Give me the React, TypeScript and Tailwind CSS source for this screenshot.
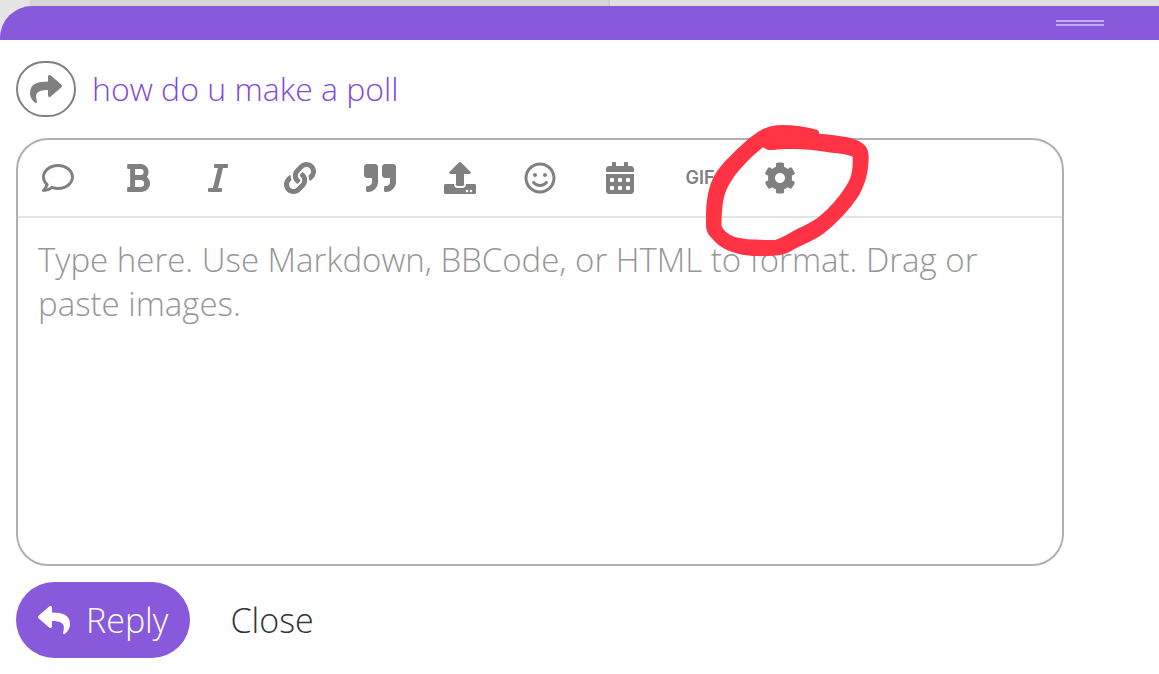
import type { ReactNode } from "react";
import {
  FaBold,
  FaCalendarAlt,
  FaCog,
  FaItalic,
  FaLink,
  FaQuoteRight,
  FaRegComment,
  FaRegSmile,
  FaReply,
  FaShare,
  FaUpload,
} from "react-icons/fa";

type Tool = { label: string; icon: ReactNode };

const textTools: Tool[] = [
  { label: "Comment", icon: <FaRegComment /> },
  { label: "Bold", icon: <FaBold /> },
  { label: "Italic", icon: <FaItalic /> },
];

const insertTools: Tool[] = [
  { label: "Link", icon: <FaLink /> },
  { label: "Quote", icon: <FaQuoteRight /> },
  { label: "Upload", icon: <FaUpload /> },
  { label: "Emoji", icon: <FaRegSmile /> },
  { label: "Date", icon: <FaCalendarAlt /> },
  {
    label: "GIF",
    icon: <span className="font-['Inter'] text-lg font-semibold">GIF</span>,
  },
  { label: "Options", icon: <FaCog /> },
];

function ToolGroup({ tools }: { tools: Tool[] }) {
  return (
    <div className="flex">
      {tools.map((tool) => (
        <button
          key={tool.label}
          type="button"
          aria-label={tool.label}
          className="flex w-20 items-center justify-center"
        >
          {tool.icon}
        </button>
      ))}
    </div>
  );
}

function HandDrawnRing() {
  return (
    <svg
      aria-hidden="true"
      viewBox="0 0 660 480"
      className="pointer-events-none absolute -top-[30px] left-[652px] h-[160px] w-[220px]"
    >
      <path
        fill="#ff3344"
        fillRule="evenodd"
        d="M440 59 C400 48 370 46 340 45 C315 45 295 49 275 59 C257 69 240 82 226 95 C195 123 165 152 146 177 C120 210 110 255 108 310 V345 C108 362 114 373 125 384 C140 402 157 415 176 422 C200 431 225 437 250 438 C280 439 310 438 330 435 C346 432 358 426 370 419 C400 402 433 391 460 371 C495 345 540 298 567 256 C586 220 595 190 596 143 C596 122 591 110 579 101 C565 91 546 84 528 81 C500 76 473 72 447 71 C448 65 446 60 440 59 Z M279 112 C248 137 212 172 188 206 C166 238 159 265 157 295 C155 315 154 335 155 349 C163 365 180 377 197 382 C220 389 270 390 316 390 C340 382 357 369 377 359 C400 349 426 336 442 324 C472 301 500 270 523 236 C545 205 549 185 548 140 C530 132 498 130 470 126 C430 118 390 116 350 117 C325 117 310 121 296 120 C289 119 284 115 279 112 Z"
      />
    </svg>
  );
}

export default function App() {
  return (
    <div className="min-h-screen bg-white font-['Open_Sans',sans-serif] text-[32px] font-light">
      <header className="bg-[#e5e5e5]">
        <div className="flex h-1.5">
          <div className="w-[30px]" />
          <div className="w-[580px] border-r-2 border-[#cdcdcd] bg-[#d5d6d5]" />
          <div className="flex-1 bg-[#e0e0e0]" />
        </div>
        <div className="flex h-[34px] items-center justify-end rounded-tl-[32px] bg-[#8959dc] pr-[55px]">
          <div className="h-1.5 w-12 border-y-2 border-[#c4abee]" />
        </div>
      </header>

      <main className="pt-[21px] pr-[95px] pb-4 pl-4">
        <div className="flex items-center gap-4">
          <button
            type="button"
            aria-label="Reply options"
            className="flex h-14 w-15 items-center justify-center rounded-[28px] border-2 border-[#808080] text-[#808080]"
          >
            <FaShare />
          </button>
          <a href="#topic" className="leading-14 text-[#8148dc]">
            how do u make a poll
          </a>
        </div>

        <div className="relative mt-[21px] rounded-[32px] border-2 border-[#b0b0b0]">
          <div className="flex h-[78px] gap-0.5 border-b-2 border-[#e4e4e4] text-[#808080]">
            <ToolGroup tools={textTools} />
            <ToolGroup tools={insertTools} />
          </div>
          <textarea
            aria-label="Message"
            placeholder="Type here. Use Markdown, BBCode, or HTML to format. Drag or paste images."
            className="block h-[346px] w-full resize-none rounded-b-[30px] bg-transparent px-5 pt-5 text-[33px] leading-11 text-[#444444] outline-none placeholder:text-[#969696]"
          />
          <HandDrawnRing />
        </div>

        <div className="mt-4 flex items-center gap-10 text-[34px]">
          <button
            type="button"
            className="flex h-[76px] items-center gap-4 rounded-full bg-[#8959dc] px-[22px] text-white"
          >
            <FaReply className="size-8" />
            Reply
          </button>
          <button type="button" className="text-[#333333]">
            Close
          </button>
        </div>
      </main>
    </div>
  );
}
